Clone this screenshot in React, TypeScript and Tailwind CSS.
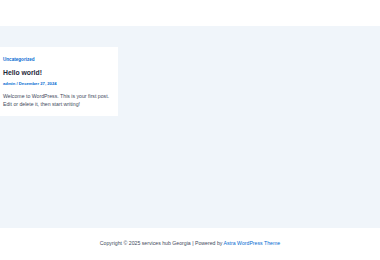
export default function App() {
  return (
    <div className="w-[380px] h-[260px] flex flex-col bg-white font-['Liberation_Sans',Arial,sans-serif]">
      <header className="h-[26px] bg-white shrink-0" />
      <main className="flex-1 bg-[#f0f5fa] pt-[21px]">
        <article className="w-[118px] h-[69px] bg-white pl-[3px] pt-[10px]">
          <a className="block text-[4.6px] leading-[6px] font-bold text-[#046bd2]">Uncategorized</a>
          <h2 className="mt-[5px] text-[6.8px] leading-[9px] font-bold text-[#1e293b]">Hello world!</h2>
          <p className="mt-[4px] text-[4.2px] leading-[5px] font-bold text-[#046bd2]">admin / December 27, 2024</p>
          <p className="mt-[6px] text-[5.2px] leading-[8px] whitespace-nowrap text-[#3f4a5c]">
            Welcome to WordPress. This is your first post.
            <br />
            Edit or delete it, then start writing!
          </p>
        </article>
      </main>
      <footer className="h-[32px] bg-white shrink-0 flex items-center justify-center">
        <p className="text-[5.2px] text-[#3f4a5c]">
          Copyright © 2025 services hub Georgia | Powered by{' '}
          <a className="text-[#046bd2]">Astra WordPress Theme</a>
        </p>
      </footer>
    </div>
  )
}
